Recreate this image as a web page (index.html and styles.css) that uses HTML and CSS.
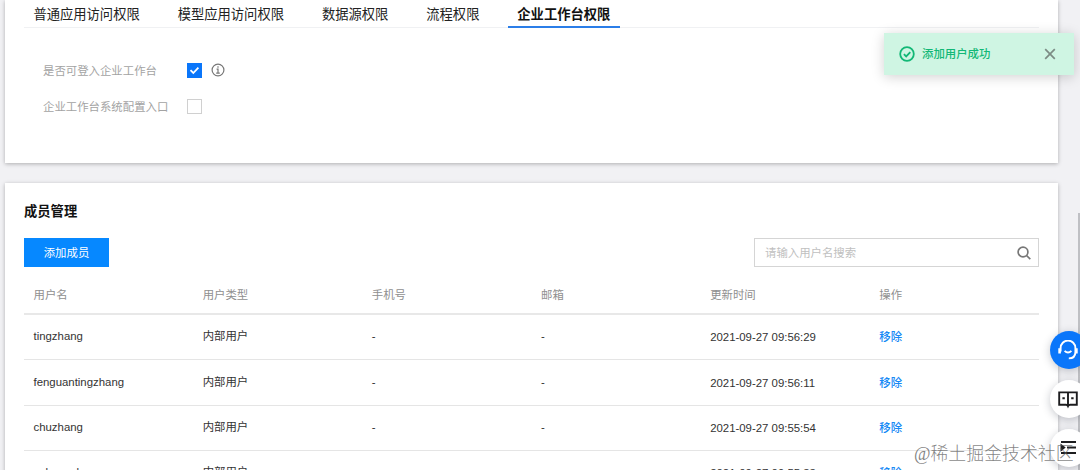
FILE: index.html
```html
<!DOCTYPE html>
<html lang="zh-CN">
<head>
<meta charset="utf-8">
<title>成员管理</title>
<link rel="stylesheet" href="styles.css">
</head>
<body>
<main class="page">
  <section class="card permissions">
    <nav class="tabs">
      <a class="tab">普通应用访问权限</a>
      <a class="tab">模型应用访问权限</a>
      <a class="tab">数据源权限</a>
      <a class="tab">流程权限</a>
      <a class="tab active">企业工作台权限</a>
    </nav>
    <div class="options">
      <div class="option">
        <span class="option-label">是否可登入企业工作台</span>
        <span class="checkbox checked"><svg viewBox="0 0 15 15"><path d="M3.5 7.2l2.8 2.8 5.1-5.4"/></svg></span>
        <svg class="info" viewBox="0 0 14 14"><circle cx="7" cy="7" r="5.9"/><path d="M5.6 6.2H7v3.9M5.2 10.2h3.6M7 3.3v1.5"/></svg>
      </div>
      <div class="option">
        <span class="option-label">企业工作台系统配置入口</span>
        <span class="checkbox"></span>
      </div>
    </div>
  </section>

  <section class="card members">
    <h2 class="title">成员管理</h2>
    <div class="toolbar">
      <button class="add">添加成员</button>
      <div class="search">
        <span>请输入用户名搜索</span>
        <svg viewBox="0 0 14 14"><circle cx="6" cy="6" r="4.9"/><path d="M9.5 9.5l3.8 3.6"/></svg>
      </div>
    </div>
    <div class="table">
      <div class="row head"><span>用户名</span><span>用户类型</span><span>手机号</span><span>邮箱</span><span>更新时间</span><span>操作</span></div>
      <div class="row"><span>tingzhang</span><span>内部用户</span><span>-</span><span>-</span><span class="time">2021-09-27 09:56:29</span><a class="remove">移除</a></div>
      <div class="row"><span>fenguantingzhang</span><span>内部用户</span><span>-</span><span>-</span><span class="time">2021-09-27 09:56:11</span><a class="remove">移除</a></div>
      <div class="row"><span>chuzhang</span><span>内部用户</span><span>-</span><span>-</span><span class="time">2021-09-27 09:55:54</span><a class="remove">移除</a></div>
      <div class="row last"><span>yuhangzhang</span><span>内部用户</span><span>-</span><span>-</span><span class="time">2021-09-27 09:55:33</span><a class="remove">移除</a></div>
    </div>
  </section>
</main>

<div class="scrollbar"></div>

<div class="toast">
  <svg class="toast-ok" viewBox="0 0 16 16"><circle cx="8" cy="8" r="6.8"/><path d="M4.9 8.1l2.3 2.3 4.1-4.2"/></svg>
  <span>添加用户成功</span>
  <svg class="toast-close" viewBox="0 0 12 12"><path d="M1.2 1.2l9.6 9.6M10.8 1.2l-9.6 9.6"/></svg>
</div>

<aside class="floaters">
  <div class="floater primary"><svg viewBox="0 0 20 20"><path d="M2.6 11.5V8a7.4 7.4 0 0 1 14.8 0V12c0 4.2-2.2 6.4-6.6 6.4"/><path class="thick" d="M1.6 8.2v5.4M18.4 8.2v5.4"/><path d="M6.6 10.8q3.4 3.4 6.8 0"/></svg></div>
  <div class="floater"><svg viewBox="0 0 20 20"><path d="M10 3.4H1.2v12.4H8q1.4 0 2 1.4.6-1.4 2-1.4h6.8V3.4zM10 3.4V17M4.4 9.3h2.4M13.2 9.3h2.4"/></svg></div>
  <div class="floater"><svg viewBox="0 0 20 20"><path d="M3 4h15M9 9.5h9M3 15h15"/><path class="solid" d="M2.5 5.4l5.2 4.2-5.2 4.2z"/></svg></div>
</aside>

<div class="watermark">@稀土掘金技术社区</div>
</body>
</html>
```

FILE: styles.css
```css
* { box-sizing: border-box; }
body {
  margin: 0;
  height: 470px;
  overflow: hidden;
  background: #f1f1f4;
  color: #333;
  font: 11.4px/16px "Liberation Sans", "Noto Sans CJK SC", sans-serif;
}
svg { fill: none; stroke: currentColor; flex: none; }
.page {
  height: 470px;
  padding: 0 22px 0 5px;
  display: flex;
  flex-direction: column;
  gap: 20px;
  overflow: hidden;
}
.card {
  flex: none;
  padding: 0 19px;
  background: #fff;
  box-shadow: 0 1px 4px rgba(0, 0, 0, .28);
}
.permissions { height: 163px; }
.tabs {
  display: flex;
  gap: 19.1px;
  height: 28px;
  border-bottom: 1px solid #f0f1f3;
}
.tab {
  height: 28px;
  padding: 1px 9.4px 0;
  font-size: 13.3px;
  line-height: 28px;
  color: #222;
  white-space: nowrap;
}
.tab.active {
  font-weight: 700;
  color: #111;
  border-bottom: 2px solid #2b7ee8;
}
.options {
  display: flex;
  flex-direction: column;
  gap: 20px;
  padding: 34px 0 0 19px;
}
.option { display: flex; align-items: center; height: 16px; }
.option-label { width: 144px; padding-top: 1px; color: #a3a3a3; }
.checkbox { width: 15px; height: 15px; border: 1px solid #d0d0d0; }
.checkbox svg { display: block; width: 15px; height: 15px; margin: -1px; stroke-width: 1.8; }
.checked { background: #0a76fa; border-color: #0a76fa; color: #fff; }
.info { width: 14px; height: 14px; margin-left: 9px; color: #777; stroke-width: 1.2; }

.members { height: 320px; padding-top: 19px; }
.title { margin: 0; font-size: 13.3px; line-height: 20px; color: #111; }
.toolbar { display: flex; justify-content: space-between; margin-top: 16px; }
.add {
  width: 85px;
  height: 29px;
  padding: 1px 0 0;
  border: 0;
  background: #0688ff;
  color: #fff;
  font: inherit;
}
.search {
  display: flex;
  justify-content: space-between;
  align-items: center;
  width: 285px;
  height: 29px;
  padding: 0 7px 0 10px;
  border: 1px solid #d5d5d5;
  color: #bfbfbf;
}
.search svg { width: 14px; height: 14px; color: #777; stroke-width: 1.7; }
.row {
  display: grid;
  grid-template-columns: repeat(6, 1fr);
  align-items: center;
  height: 45.6px;
  padding-bottom: 1px;
  border-bottom: 1px solid #e5e5e5;
}
.row > * { padding-left: 9.5px; }
.head { height: 47.5px; padding: 10px 0 0; border-bottom: 2px solid #e8e8e8; color: #8f8f8f; }
.row .time, .row .remove { padding-top: 2px; }
.remove { color: #1689f5; font-weight: 500; }
.last { padding-bottom: 3px; }

.scrollbar { position: absolute; left: 1078px; top: 213px; width: 2px; height: 257px; background: #bfc0c4; }
.toast {
  position: absolute;
  left: 884px;
  top: 33px;
  width: 190px;
  height: 42px;
  display: flex;
  align-items: center;
  padding: 0 18px 0 15px;
  background: #cff5e3;
  color: #12b876;
  font-weight: 500;
  box-shadow: 0 2px 12px rgba(0, 0, 0, .18);
}
.toast-ok { width: 16px; height: 16px; margin-right: 7px; stroke-width: 1.8; }
.toast-close { width: 12px; height: 12px; margin-left: auto; color: #7c8b84; stroke-width: 1.7; }

.floaters { position: absolute; left: 1050px; top: 331px; display: flex; flex-direction: column; gap: 11px; }
.floater {
  display: flex;
  align-items: center;
  justify-content: center;
  width: 38px;
  height: 38px;
  padding: 0 2px 1px 0;
  border-radius: 50%;
  background: #fff;
  color: #1d1d1f;
  box-shadow: 0 2px 9px rgba(30, 40, 60, .25);
}
.floater svg { width: 20px; height: 20px; stroke-width: 1.9; }
.floater.primary { background: #0a76fa; color: #fff; }
.floater .thick { stroke-width: 2.6; }
.solid { fill: currentColor; stroke: none; }
.watermark {
  position: absolute;
  left: 914px;
  top: 441px;
  font: 300 17.9px/26px "Liberation Serif", "Noto Sans CJK SC", serif;
  color: rgba(90, 90, 90, .75);
  white-space: nowrap;
}
```
